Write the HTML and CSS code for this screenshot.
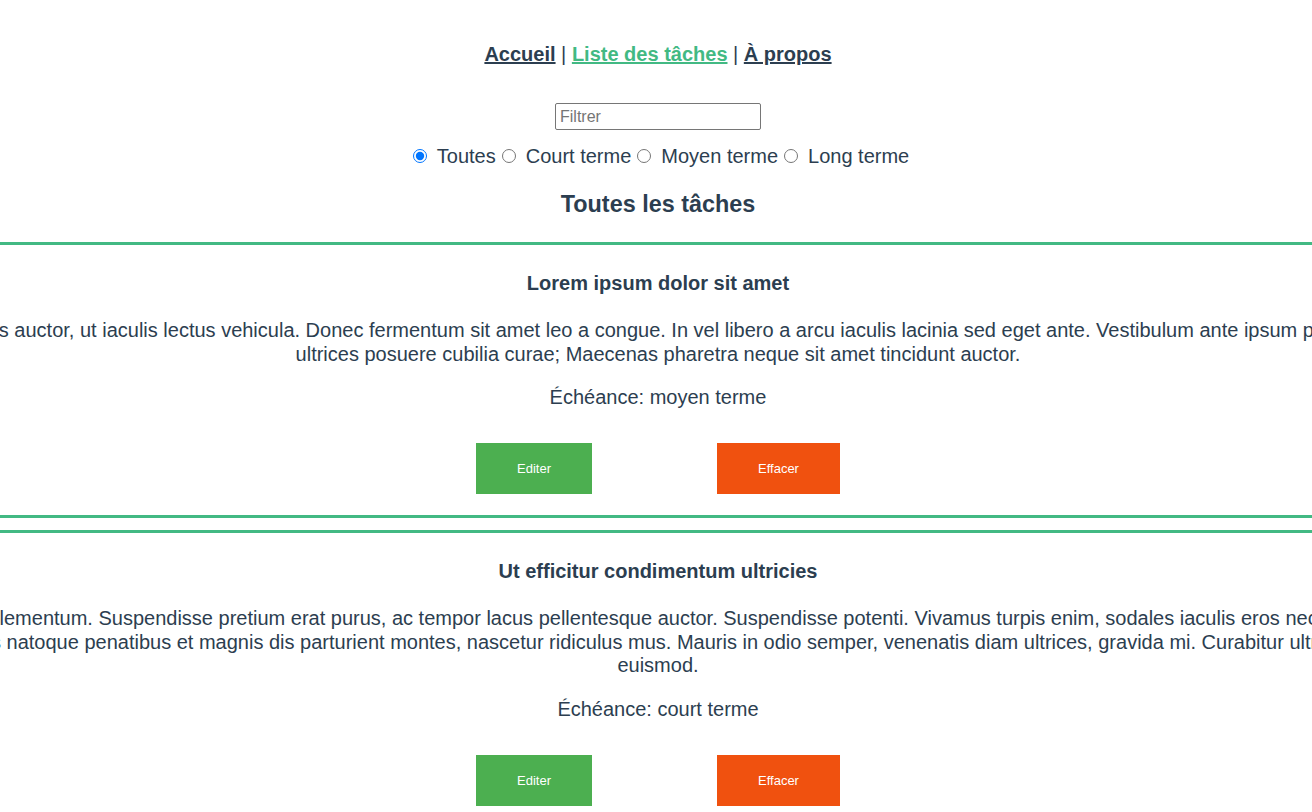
FILE: index.html
```html
<!DOCTYPE html>
<html lang="fr">
<head>
<meta charset="utf-8">
<title>Liste des tâches</title>
<link rel="stylesheet" href="styles.css">
</head>
<body>
<div class="app">
  <nav class="nav"><a class="nav-link" href="#">Accueil</a> | <a class="nav-link active" href="#">Liste des tâches</a> | <a class="nav-link" href="#">À propos</a></nav>

  <section class="filters">
    <input class="search" type="text" placeholder="Filtrer">
    <div class="radios">
      <label class="option"><input class="radio" type="radio" name="terme" checked>Toutes</label>
      <label class="option"><input class="radio" type="radio" name="terme">Court terme</label>
      <label class="option"><input class="radio" type="radio" name="terme">Moyen terme</label>
      <label class="option"><input class="radio" type="radio" name="terme">Long terme</label>
    </div>
  </section>

  <h3 class="list-title">Toutes les tâches</h3>

  <div class="tasks">
    <article class="task">
      <h4 class="task-title">Lorem ipsum dolor sit amet</h4>
      <p class="task-desc">Praesent eget nisl dui dapibus auctor, ut iaculis lectus vehicula. Donec fermentum sit amet leo a congue. In vel libero a arcu iaculis lacinia sed eget ante. Vestibulum ante ipsum primis in faucibus orci luctus et<br>ultrices posuere cubilia curae; Maecenas pharetra neque sit amet tincidunt auctor.</p>
      <p class="task-due">Échéance: moyen terme</p>
      <div class="task-actions">
        <button class="btn btn-edit">Editer</button>
        <button class="btn btn-delete">Effacer</button>
      </div>
    </article>

    <article class="task">
      <h4 class="task-title">Ut efficitur condimentum ultricies</h4>
      <p class="task-desc">Nullam augue elementum. Suspendisse pretium erat purus, ac tempor lacus pellentesque auctor. Suspendisse potenti. Vivamus turpis enim, sodales iaculis eros nec, rutrum dictum.<br>Cum sociis natoque penatibus et magnis dis parturient montes, nascetur ridiculus mus. Mauris in odio semper, venenatis diam ultrices, gravida mi. Curabitur ultrices metus<br>euismod.</p>
      <p class="task-due">Échéance: court terme</p>
      <div class="task-actions">
        <button class="btn btn-edit">Editer</button>
        <button class="btn btn-delete">Effacer</button>
      </div>
    </article>
  </div>
</div>
</body>
</html>
```

FILE: styles.css
```css
html, body {
  margin: 0;
  padding: 0;
  background: #ffffff;
  overflow-x: hidden;
}

body {
  font-family: "Liberation Sans", Arial, Helvetica, sans-serif;
  font-size: 20px;
  color: #2c3e50;
}

.app {
  text-align: center;
}

.nav {
  padding: 43px 0 0 4px;
  line-height: 23px;
}

.nav-link {
  color: #2c3e50;
  font-weight: bold;
  text-decoration: underline;
}

.nav-link.active {
  color: #42b983;
}

.filters {
  margin-top: 37px;
  padding-left: 4px;
  display: flex;
  flex-direction: column;
  align-items: center;
}

.search {
  box-sizing: border-box;
  width: 206px;
  height: 27px;
  margin: 0;
  padding: 1px 4px;
  border: 1px solid #767676;
  border-radius: 2px;
  font-family: "Liberation Sans", Arial, sans-serif;
  font-size: 16px;
  color: #2c3e50;
}

.search::placeholder {
  color: #757575;
}

.radios {
  margin-top: 15px;
  display: flex;
  align-items: center;
  line-height: 23px;
}

.option {
  display: flex;
  align-items: center;
}

.radio {
  width: 14px;
  height: 14px;
  margin: 0 10px 2px 6px;
}

.list-title {
  margin: 23px 0 24px;
  padding-left: 4px;
  font-size: 23.4px;
  line-height: 27px;
  font-weight: bold;
}

.tasks {
  display: flex;
  flex-direction: column;
  gap: 12px;
}

.task {
  border-top: 3px solid #42b983;
  border-bottom: 3px solid #42b983;
  padding: 0 0 21px 4px;
  display: flex;
  flex-direction: column;
  align-items: center;
}

.task-title {
  margin: 27px 0 24px;
  font-size: 20px;
  line-height: 23px;
  font-weight: bold;
}

.task-desc {
  margin: 0;
  width: 2600px;
  flex-shrink: 0;
  white-space: nowrap;
  line-height: 23.5px;
}

.task-due {
  margin: 20px 0 0;
  line-height: 23px;
}

.task-actions {
  margin-top: 34px;
  display: flex;
  gap: 125px;
}

.btn {
  height: 51px;
  padding: 0 41px;
  border: none;
  color: #ffffff;
  font-family: "Liberation Sans", Arial, sans-serif;
  font-size: 13px;
  cursor: pointer;
}

.btn-edit {
  background: #4caf50;
}

.btn-delete {
  background: #f0510f;
}
```
